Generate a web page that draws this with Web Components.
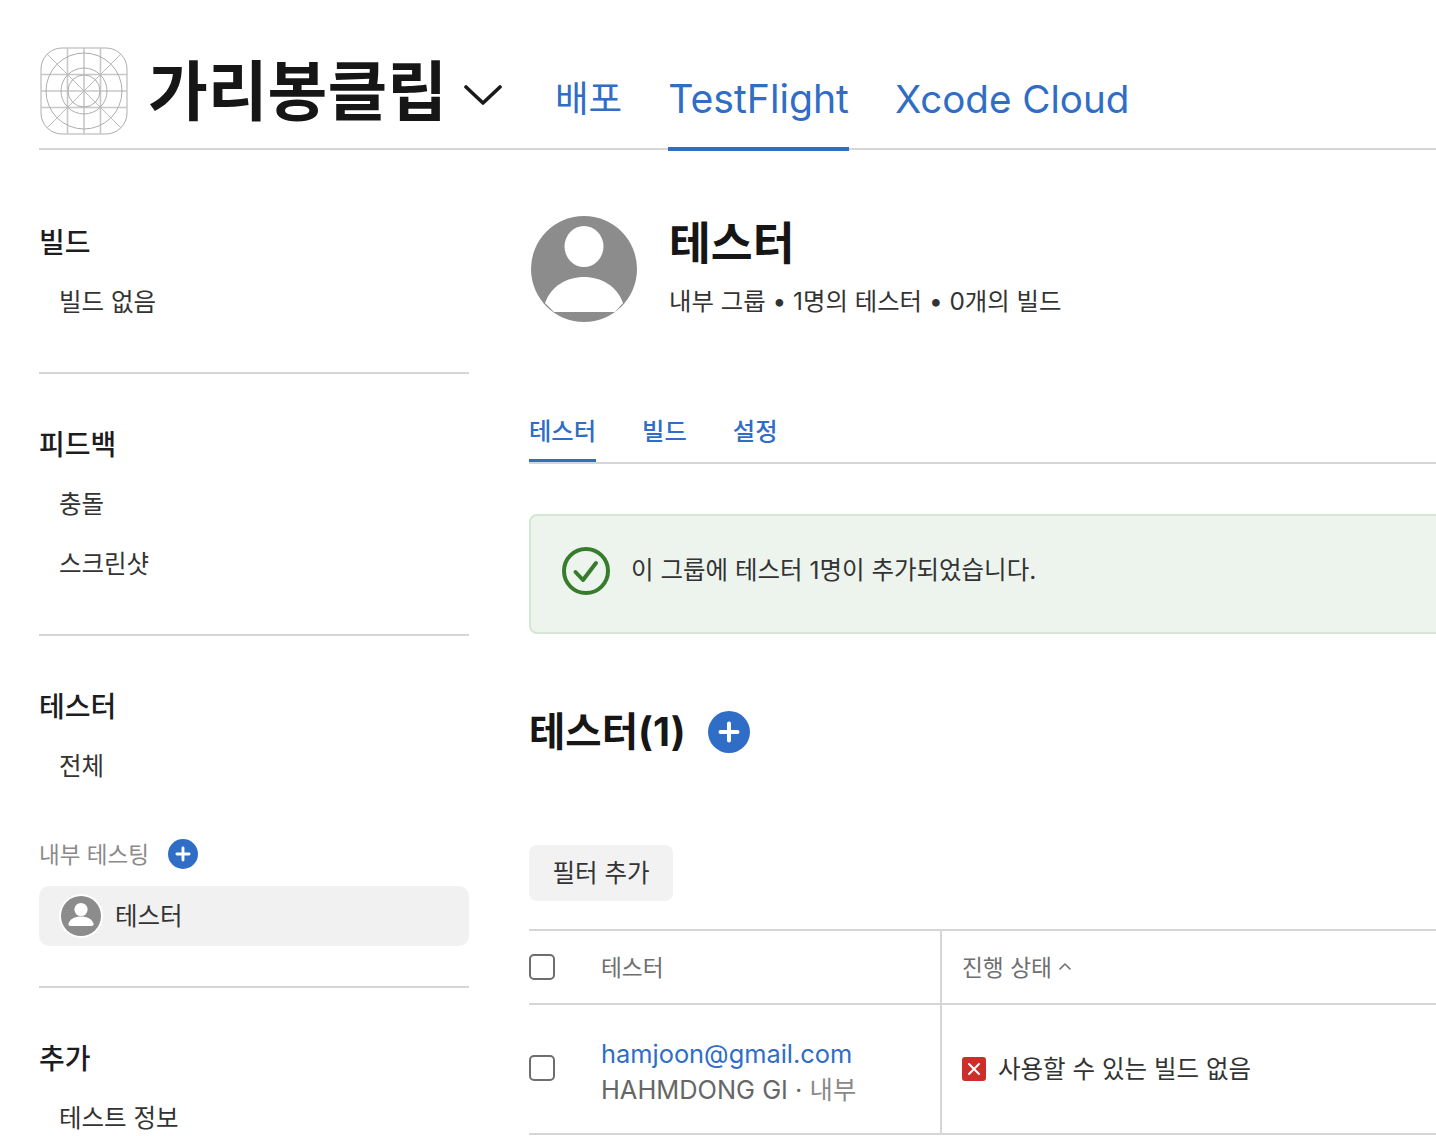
<!DOCTYPE html>
<html lang="ko">
<head>
<meta charset="utf-8">
<title>TestFlight</title>
<style>
    html, body { margin: 0; height: 1136px; overflow: hidden; background: #fff; }
    body { font-family: Inter, "Noto Sans CJK KR", sans-serif; color: #1d1d1f; }
</style>
</head>
<body>
<app-page>
    <app-header slot="header" name="가리봉클립"></app-header>
    <side-nav slot="side">
        <nav-section title="빌드"><nav-item>빌드 없음</nav-item></nav-section>
        <nav-section title="피드백"><nav-item>충돌</nav-item><nav-item>스크린샷</nav-item></nav-section>
        <nav-section title="테스터" tight>
            <nav-item>전체</nav-item>
            <nav-group title="내부 테스팅"></nav-group>
            <nav-item selected>테스터</nav-item>
        </nav-section>
        <nav-section title="추가" last><nav-item>테스트 정보</nav-item></nav-section>
    </side-nav>
    <group-detail slot="main"></group-detail>
</app-page>

<script>
const FONT = 'Inter, "Noto Sans CJK KR", sans-serif';
const BLUE = '#2f6dc6';
const LINE = '#d6d6d6';

const PLUS = (size) => `
    <svg width="${size}" height="${size}" viewBox="0 0 42 42" style="display:block;flex:none">
        <circle cx="21" cy="21" r="21" fill="${BLUE}"/>
        <path d="M21 12.500v17M12.500 21h17" stroke="#fff" stroke-width="4" stroke-linecap="round"/>
    </svg>`;

class AppPage extends HTMLElement {
    connectedCallback() {
        this.attachShadow({ mode: 'open' }).innerHTML = `
            <style>
                :host { display: block; width: 1436px; height: 1136px; overflow: hidden; font-family: ${FONT}; }
                .body { display: flex; padding-left: 39px; }
                ::slotted([slot=side]) { flex: none; width: 430px; }
                ::slotted([slot=main]) { flex: none; width: 1000px; margin-left: 60px; }
            </style>
            <slot name="header"></slot>
            <div class="body"><slot name="side"></slot><slot name="main"></slot></div>`;
    }
}

class AppHeader extends HTMLElement {
    connectedCallback() {
        this.attachShadow({ mode: 'open' }).innerHTML = `
            <style>
                :host { display: flex; margin-left: 39px; height: 101px; padding-top: 47px; border-bottom: 2px solid ${LINE}; }
                .icon { display: block; flex: none; margin-left: 1px; }
                h1 { margin: 1px 0 0 20px; font-size: 65px; line-height: 88px; font-weight: 700; color: #161616; }
                .chev { display: block; margin: 38px 53px 0 17px; flex: none; }
                nav { display: flex; gap: 47px; align-self: flex-end; margin-bottom: -3px; }
                a { display: block; line-height: 48px; box-sizing: border-box; height: 76px; font-size: 38.600px; color: ${BLUE}; border-bottom: 4px solid transparent; }
                a.on { border-bottom-color: ${BLUE}; font-size: 39.200px; margin-right: -1px; }
                a.ko { font-size: 36.500px; margin-right: -1px; }
            </style>
            <svg class="icon" width="88" height="88" viewBox="0 0 88 88" fill="none" stroke="#adadad" stroke-width="1">
                <rect x="1" y="1" width="86" height="86" rx="21"/>
                <path d="M27.500 1v86M44 1v86M60.500 1v86M1 27.500h86M1 44h86M1 60.500h86" stroke="#c8c8c8" stroke-width="1.600"/>
                <path d="M7 7l74 74M81 7L7 81" stroke="#bcbcbc"/>
                <circle cx="44" cy="44" r="38"/>
                <circle cx="44" cy="44" r="23"/>
                <circle cx="44" cy="44" r="16"/>
            </svg>
            <h1>${this.getAttribute('name')}</h1>
            <svg class="chev" width="38" height="20" viewBox="0 0 38 20" fill="none">
                <path d="M2 2l17 16L36 2" stroke="#1a1a1a" stroke-width="3.600" stroke-linecap="round" stroke-linejoin="round"/>
            </svg>
            <nav><a class="ko">배포</a><a class="on">TestFlight</a><a>Xcode Cloud</a></nav>`;
    }
}

class SideNav extends HTMLElement {
    connectedCallback() {
        this.attachShadow({ mode: 'open' }).innerHTML = `
            <style>:host { display: block; padding-top: 71px; }</style><slot></slot>`;
    }
}

class NavSection extends HTMLElement {
    connectedCallback() {
        this.attachShadow({ mode: 'open' }).innerHTML = `
            <style>
                :host { display: block; padding-bottom: 42px; margin-bottom: 49px; border-bottom: 2px solid ${LINE}; }
                :host([tight]) { padding-bottom: 40px; }
                :host([last]) { border-bottom: 0; }
                h3 { margin: 0 0 7px; padding-top: 2px; font-size: 28px; line-height: 40px; font-weight: 500; color: #1d1d1f; }
            </style>
            <h3>${this.getAttribute('title')}</h3><slot></slot>`;
    }
}

class NavItem extends HTMLElement {
    connectedCallback() {
        const selected = this.hasAttribute('selected');
        this.attachShadow({ mode: 'open' }).innerHTML = `
            <style>
                :host { display: flex; align-items: center; height: 60px; padding-left: 20px; font-size: 24.500px; color: #333; }
                :host([selected]) { background: #f1f1f1; border-radius: 10px; gap: 12px; }
                :host([selected]) span { margin-top: -4px; }
                svg { display: block; flex: none; }
            </style>
            ${selected ? `<svg width="44" height="44" viewBox="0 0 44 44">
                <circle cx="22" cy="22" r="22" fill="#fff"/><circle cx="22" cy="22" r="20" fill="#8c8c8c"/>
                <circle cx="22" cy="15.500" r="6.600" fill="#fff"/>
                <path d="M9.500 29.500c1.500-4.500 6.600-7 12.500-7s11 2.500 12.500 7c.4 1.300-.5 2.500-2 2.500h-21c-1.500 0-2.400-1.200-2-2.500z" fill="#fff"/>
            </svg>` : ''}<span><slot></slot></span>`;
    }
}

class NavGroup extends HTMLElement {
    connectedCallback() {
        this.attachShadow({ mode: 'open' }).innerHTML = `
            <style>
                :host { display: flex; align-items: center; gap: 19px; margin-top: 39px; height: 40px; margin-bottom: 13px; font-size: 22.500px; color: #8a8a8a; }
                svg { margin-top: 2px; }
            </style>
            <span>${this.getAttribute('title')}</span>${PLUS(30)}`;
    }
}

class GroupDetail extends HTMLElement {
    connectedCallback() {
        this.attachShadow({ mode: 'open' }).innerHTML = `
            <style>
                :host { display: block; padding-top: 66px; }
                .head { display: flex; height: 106px; }
                .avatar { display: block; flex: none; margin-left: 2px; }
                .info { margin-left: 32px; }
                h2 { margin: 0; font-size: 45.500px; line-height: 56px; font-weight: 700; color: #161616; }
                p { margin: 13px 0 0; font-size: 24.400px; line-height: 32px; color: #333; }
                .tabs { display: flex; gap: 46px; margin-top: 88px; height: 52px; border-bottom: 2px solid ${LINE}; font-size: 24.300px; font-weight: 500; color: ${BLUE}; }
                .tabs a { display: block; line-height: 32px; padding-top: 5px; height: 44px; }
                .tabs a.on { border-bottom: 3px solid ${BLUE}; }
                .notice { display: flex; align-items: center; gap: 21px; height: 116px; margin-top: 50px; padding-left: 31px; border: 2px solid #d4e6d4; border-radius: 8px; background: #edf4ee; font-size: 24.500px; color: #333; }
                .notice svg { display: block; flex: none; margin-bottom: 6px; }
                .notice span { margin-top: -12px; }
                .title { display: flex; align-items: center; gap: 22px; margin-top: 74px; height: 48px; }
                .title h2 { font-size: 39.500px; line-height: 48px; }
                .filter { margin-top: 89px; width: 144px; height: 56px; border-radius: 8px; background: #f2f2f2; font-size: 24.500px; line-height: 56px; text-align: center; color: #333; }
                .table { margin-top: 28px; border-top: 2px solid ${LINE}; }
                .row { display: grid; grid-template-columns: 411px 1fr; border-bottom: 2px solid ${LINE}; }
                .cell { display: flex; align-items: center; }
                .c2 { border-left: 2px solid ${LINE}; padding-left: 20px; }
                .box { flex: none; width: 22px; height: 22px; border: 2px solid #6e6e6e; border-radius: 5px; margin-right: 46px; }
                .bd .box { margin-top: -2px; }
                .hd { height: 72px; font-size: 22.700px; color: #6e6e6e; }
                .hd span.t { margin-top: -2px; }
                .bd { height: 128px; }
                .two { padding-top: 6px; line-height: 36px; font-size: 25.400px; color: #666; white-space: nowrap; }
                .two a { display: block; color: ${BLUE}; }
                .two i { font-style: normal; color: #8a8a8a; }
                .caret { display: block; margin-left: 6px; margin-top: -2px; }
                .x { display: block; flex: none; margin-right: 12px; }
                .status { font-size: 24.500px; color: #333; margin-top: -4px; }
            </style>
            <div class="head">
                <svg class="avatar" width="106" height="106" viewBox="0 0 106 106">
                    <circle cx="53" cy="53" r="53" fill="#8c8c8c"/>
                    <ellipse cx="53" cy="30.500" rx="19.500" ry="20.500" fill="#fff"/>
                    <path d="M14 87C20 70 36 61 53 61s33 9 39 26l-8 9H23z" fill="#fff"/>
                </svg>
                <div class="info"><h2>테스터</h2><p>내부 그룹 • 1명의 테스터 • 0개의 빌드</p></div>
            </div>
            <div class="tabs"><a class="on">테스터</a><a>빌드</a><a>설정</a></div>
            <div class="notice">
                <svg width="48" height="48" viewBox="0 0 48 48" fill="none">
                    <circle cx="24" cy="24" r="22" stroke="#367c2b" stroke-width="4"/>
                    <path d="M13.500 25l7.500 8 13-17" stroke="#367c2b" stroke-width="4" stroke-linecap="round" stroke-linejoin="round"/>
                </svg>
                <span>이 그룹에 테스터 1명이 추가되었습니다.</span>
            </div>
            <div class="title"><h2>테스터(1)</h2>${PLUS(42)}</div>
            <div class="filter">필터 추가</div>
            <div class="table">
                <div class="row hd">
                    <div class="cell"><span class="box"></span><span class="t">테스터</span></div>
                    <div class="cell c2"><span class="t">진행 상태</span>
                        <svg class="caret" width="14" height="9" viewBox="0 0 14 9" fill="none"><path d="M2 7l5-5 5 5" stroke="#6e6e6e" stroke-width="1.600" stroke-linecap="round" stroke-linejoin="round"/></svg>
                    </div>
                </div>
                <div class="row bd">
                    <div class="cell"><span class="box"></span>
                        <div class="two"><a>hamjoon@gmail.com</a>HAHMDONG GI · <i>내부</i></div>
                    </div>
                    <div class="cell c2">
                        <svg class="x" width="24" height="24" viewBox="0 0 24 24"><rect width="24" height="24" rx="3" fill="#cc2f2b"/><path d="M7 7l10 10M17 7L7 17" stroke="#fff" stroke-width="2" stroke-linecap="round"/></svg>
                        <span class="status">사용할 수 있는 빌드 없음</span>
                    </div>
                </div>
            </div>`;
    }
}

customElements.define('app-page', AppPage);
customElements.define('app-header', AppHeader);
customElements.define('side-nav', SideNav);
customElements.define('nav-section', NavSection);
customElements.define('nav-item', NavItem);
customElements.define('nav-group', NavGroup);
customElements.define('group-detail', GroupDetail);
</script>
</body>
</html>
